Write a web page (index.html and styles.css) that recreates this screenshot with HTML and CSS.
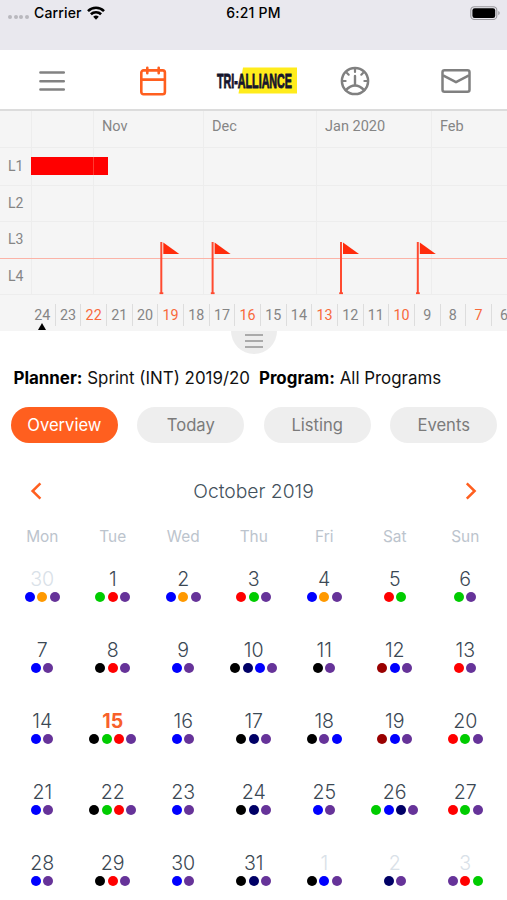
FILE: index.html
```html
<!DOCTYPE html>
<html lang="en">
<head>
<meta charset="utf-8">
<meta name="viewport" content="width=device-width, initial-scale=1">
<title>Planner</title>
<link rel="stylesheet" href="styles.css">
</head>
<body>
<header class="status">
  <div class="carrier">
    <span class="signal"><i></i><i></i><i></i><i></i></span>
    <span>Carrier</span>
    <svg class="wifi" width="18" height="14" viewBox="0 0 18 14" fill="none" stroke="#000" stroke-width="2.6"><path d="M1 5.1a11.4 11.4 0 0 1 16 0"/><path d="M3.9 8.3a7.3 7.3 0 0 1 10.2 0"/><path d="M9 13.7 6.2 10.8a4 4 0 0 1 5.6 0z" fill="#000" stroke="none"/></svg>
  </div>
  <div class="clock">6:21 PM</div>
  <svg class="battery" width="30" height="14" viewBox="0 0 30 14"><rect x=".8" y=".7" width="26" height="12.8" rx="3.6" fill="none" stroke="#99989d" stroke-width="1.1"/><rect x="2.4" y="2.3" width="22.8" height="9.6" rx="2.2"/><path d="M28.3 5v4.2q1.4-.7 1.4-2.1T28.3 5z" fill="#99989d"/></svg>
</header>
<nav class="nav">
  <a><svg width="28" height="24" viewBox="0 0 28 24" stroke="#828282" stroke-width="2.5" stroke-linecap="round"><path d="M2.4 3.4h23.4M2.4 12.2h23.4M2.4 20.6h23.4"/></svg></a>
  <a><svg width="28" height="30" viewBox="0 0 28 30" fill="none" stroke="#ff5f1f" stroke-width="2.6" stroke-linecap="round" stroke-linejoin="round"><rect x="2.3" y="4.4" width="23.6" height="23.8" rx="2.2"/><path d="M2.3 13.6h23.4M8.3 1.8v5.4M19.7 1.8v5.4"/></svg></a>
  <a><svg class="logo" width="82" height="30" viewBox="0 0 82 30"><path d="M27 1.5h54v26H22.5z" fill="#ffec1c"/><text transform="translate(1 21.7) scale(.53 1)" textLength="141.5" lengthAdjust="spacingAndGlyphs">TRI-ALLIANCE</text></svg></a>
  <a><svg width="30" height="30" viewBox="0 0 30 30" fill="none" stroke="#808080" stroke-width="2.5" stroke-linecap="round"><circle cx="15" cy="15" r="13.1"/><path d="M15 10v9" stroke-width="2.4"/><path d="M5.8 24.2Q15 14.8 24.2 24.2"/><path d="M15 3v3M7 7l1.7 1.7M23 7l-1.7 1.7M3 15h2.6M27 15h-2.6" stroke-width="2.2"/></svg></a>
  <a><svg width="30" height="26" viewBox="0 0 30 26" fill="none" stroke="#808080" stroke-width="2.5" stroke-linejoin="round"><rect x="1.5" y="2.3" width="27" height="21.4" rx="2"/><path d="m2 7.3 13 6.9 13-6.9"/></svg></a>
</nav>
<section class="timeline">
  <div class="row months"><span></span><span></span><span>Nov</span><span>Dec</span><span>Jan 2020</span><span>Feb</span></div>
  <div class="row level first"><span>L1</span><span></span><span></span><span></span><span></span><span></span><b class="block"></b></div>
  <div class="row level second"><span>L2</span><span></span><span></span><span></span><span></span><span></span></div>
  <div class="row level third"><span>L3</span><span></span><span></span><span></span><span></span><span></span></div>
  <div class="row level fourth"><span>L4</span><span></span><span></span><span></span><span></span><span></span></div>
  <svg class="flags" width="507" height="54" viewBox="0 0 507 54"><defs><g id="flag"><path d="M0 1v51" stroke="#ff4a30" stroke-width="2"/><path d="M-1.8 52.2h3.8" stroke="#ff4a30" stroke-width="1.8"/><path d="M2 1.6 18 13H2z" fill="#ff2c0c"/></g></defs><use href="#flag" x="161.3"/><use href="#flag" x="212.6"/><use href="#flag" x="341"/><use href="#flag" x="417.8"/></svg>
  <div class="weeks"><span class="now">24</span><span>23</span><span class="hot">22</span><span>21</span><span>20</span><span class="hot">19</span><span>18</span><span>17</span><span class="hot">16</span><span>15</span><span>14</span><span class="hot">13</span><span>12</span><span>11</span><span class="hot">10</span><span>9</span><span>8</span><span class="hot">7</span><span>6</span></div>
</section>
<div class="handle"><i></i><i></i><i></i></div>
<div class="info"><span><b>Planner:</b> Sprint (INT) 2019/20</span><span><b>Program:</b> All Programs</span></div>
<div class="tabs"><a class="active">Overview</a><a>Today</a><a>Listing</a><a>Events</a></div>
<div class="month">
  <svg width="12" height="18" viewBox="0 0 12 18"><path d="M10.4 1.4 2.6 9l7.8 7.6"/></svg>
  <h1>October 2019</h1>
  <svg width="12" height="18" viewBox="0 0 12 18"><path d="M1.8 1.4 9.6 9l-7.8 7.6"/></svg>
</div>
<div class="days"><span>Mon</span><span>Tue</span><span>Wed</span><span>Thu</span><span>Fri</span><span>Sat</span><span>Sun</span></div>
<main class="cal">
  <div class="out">30<p><i class="b"></i><i class="o"></i><i class="p"></i></p></div>
  <div>1<p><i class="g"></i><i class="r"></i><i class="p"></i></p></div>
  <div>2<p><i class="b"></i><i class="o"></i><i class="p"></i></p></div>
  <div>3<p><i class="r"></i><i class="g"></i><i class="p"></i></p></div>
  <div>4<p><i class="b"></i><i class="o"></i><i class="p"></i></p></div>
  <div>5<p><i class="r"></i><i class="g"></i></p></div>
  <div>6<p><i class="g"></i><i class="p"></i></p></div>

  <div>7<p><i class="b"></i><i class="p"></i></p></div>
  <div>8<p><i class="k"></i><i class="r"></i><i class="p"></i></p></div>
  <div>9<p><i class="b"></i><i class="p"></i></p></div>
  <div>10<p><i class="k"></i><i class="n"></i><i class="b"></i><i class="p"></i></p></div>
  <div>11<p><i class="k"></i><i class="p"></i></p></div>
  <div>12<p><i class="m"></i><i class="b"></i><i class="p"></i></p></div>
  <div>13<p><i class="r"></i><i class="p"></i></p></div>

  <div>14<p><i class="b"></i><i class="p"></i></p></div>
  <div class="today">15<p><i class="k"></i><i class="g"></i><i class="r"></i><i class="p"></i></p></div>
  <div>16<p><i class="b"></i><i class="p"></i></p></div>
  <div>17<p><i class="k"></i><i class="n"></i><i class="p"></i></p></div>
  <div>18<p><i class="k"></i><i class="p"></i><i class="b"></i></p></div>
  <div>19<p><i class="m"></i><i class="b"></i><i class="p"></i></p></div>
  <div>20<p><i class="r"></i><i class="g"></i><i class="p"></i></p></div>

  <div>21<p><i class="b"></i><i class="p"></i></p></div>
  <div>22<p><i class="k"></i><i class="g"></i><i class="r"></i><i class="p"></i></p></div>
  <div>23<p><i class="b"></i><i class="p"></i></p></div>
  <div>24<p><i class="k"></i><i class="n"></i><i class="p"></i></p></div>
  <div>25<p><i class="b"></i><i class="p"></i></p></div>
  <div>26<p><i class="g"></i><i class="b"></i><i class="n"></i><i class="p"></i></p></div>
  <div>27<p><i class="r"></i><i class="g"></i><i class="p"></i></p></div>

  <div>28<p><i class="b"></i><i class="p"></i></p></div>
  <div>29<p><i class="k"></i><i class="r"></i><i class="p"></i></p></div>
  <div>30<p><i class="b"></i><i class="p"></i></p></div>
  <div>31<p><i class="k"></i><i class="n"></i><i class="p"></i></p></div>
  <div class="out">1<p><i class="k"></i><i class="b"></i><i class="p"></i></p></div>
  <div class="out">2<p><i class="n"></i><i class="p"></i></p></div>
  <div class="out">3<p><i class="p"></i><i class="r"></i><i class="g"></i></p></div>
</main>
</body>
</html>
```
FILE: styles.css
```css
* { box-sizing: border-box; }
body {
  margin: 0;
  height: 900px;
  overflow: hidden;
  background: #fff;
  font-family: Inter, "Liberation Sans", sans-serif;
  color: #000;
}
svg { display: block; flex: none; overflow: visible; }

.status {
  display: grid;
  grid-template-columns: 1fr auto 1fr;
  align-items: start;
  height: 50px;
  padding: 6px 7px 0 8px;
  background: #e9e8ee;
  font-size: 14px;
  line-height: 14px;
  font-weight: 500;
}
.carrier { display: flex; gap: 5px; letter-spacing: .15px; }
.signal { display: flex; gap: 1.7px; padding-top: 9px; }
.signal i { width: 4px; height: 4px; border-radius: 50%; background: #b9b8bd; }
.clock { letter-spacing: .25px; margin-left: -1px; }
.battery { justify-self: end; }

.nav {
  display: grid;
  grid-template-columns: repeat(5, 1fr);
  align-items: center;
  height: 61px;
  padding: 2px 0 0 1px;
  border-bottom: 2px solid #dcdcdc;
}
.nav a { display: flex; justify-content: center; }
.logo { margin-left: 6px; }
.logo text {
  font-family: "Liberation Sans", sans-serif;
  font-size: 20.5px;
  font-weight: 700;
  fill: #15152d;
  stroke: #15152d;
  stroke-width: .9px;
}

.timeline {
  position: relative;
  height: 220px;
  background: #f5f5f5;
  color: #858585;
  font: 14.5px/35px Roboto, sans-serif;
  overflow: hidden;
}
.row {
  position: relative;
  display: grid;
  grid-template-columns: 32px 62px 110px 113px 115px 1fr;
  height: 37px;
  border-bottom: 1px solid #ededed;
}
.row span { border-right: 1px solid #ededed; }
.row span:last-of-type { border-right: 0; }
.months { line-height: 31px; }
.months span { padding-left: 8px; }
.level span:first-child { padding-left: 8px; font-size: 14px; }
.first { height: 38px; line-height: 36px; }
.second { height: 36px; }
.third { height: 37px; border-bottom-color: #fbb3a7; }
.fourth { height: 36px; }
.block {
  position: absolute;
  left: 31px;
  top: 9px;
  width: 77px;
  height: 18px;
  background: linear-gradient(90deg, #f00 62px, #ff3a30 62px 63px, #f00 63px);
}
.flags { position: absolute; left: 0; top: 130px; }
.weeks { display: flex; padding: 9px 0 0 30px; height: 36px; }
.weeks span {
  position: relative;
  flex: 0 0 25.67px;
  height: 22px;
  border-right: 1px solid #ddd;
  text-align: center;
  font-size: 14.3px;
  line-height: 23px;
}
.weeks .hot { color: #f8693c; }
.weeks .now::after {
  content: "";
  position: absolute;
  left: 7.5px;
  top: 19px;
  border: 4.5px solid transparent;
  border-top: 0;
  border-bottom: 7px solid #000;
}

.handle {
  display: flex;
  flex-direction: column;
  align-items: center;
  gap: 4px;
  width: 46px;
  height: 23px;
  padding-top: 3px;
  margin: 0 auto;
  border-radius: 0 0 23px 23px;
  background: #ededed;
}
.handle i { width: 18px; height: 2px; background: #aaa; }

.info {
  display: flex;
  gap: 9px;
  height: 53px;
  padding: 14px 13.5px 0;
  font-size: 16.9px;
  line-height: 21px;
  white-space: nowrap;
  color: #111;
}
.info b { font-weight: 700; color: #000; }
.tabs {
  display: grid;
  grid-template-columns: repeat(4, 106.6px);
  justify-content: space-between;
  padding: 0 10px 0 11px;
}
.tabs a {
  height: 36px;
  border-radius: 18px;
  background: #eee;
  color: #7b7b7b;
  font-size: 16.6px;
  line-height: 36px;
  text-align: center;
}
.tabs .active { background: #ff5f1f; color: #fff; }
.month {
  display: flex;
  align-items: center;
  justify-content: space-between;
  height: 24px;
  margin-top: 36px;
  padding: 0 30px;
}
.month path { fill: none; stroke: #ff5f1f; stroke-width: 2.5; }
.month h1 { margin: 0; font-size: 19.3px; font-weight: 300; color: #43515c; }
.days, .cal {
  display: grid;
  grid-template-columns: repeat(7, 70.5px);
  padding: 0 0 0 7px;
  text-align: center;
}
.days {
  margin-top: 23px;
  height: 41px;
  font-size: 15.4px;
  line-height: 21px;
  color: #bcc4cd;
}
.cal { grid-auto-rows: 71px; font-size: 19.6px; font-weight: 300; line-height: 24px; color: #3b4854; }
.cal p { display: flex; justify-content: center; gap: 2.3px; margin: 1px 0 0; }
.cal i { width: 10px; height: 10px; border-radius: 50%; }
.cal .out { color: #d9e1e8; }
.cal .today { color: #f8602a; font-weight: 700; }
.b { background: #00f; }
.o { background: #f90; }
.p { background: #639; }
.g { background: #0c0; }
.r { background: #f00; }
.k { background: #000; }
.n { background: #006; }
.m { background: #900; }
```
